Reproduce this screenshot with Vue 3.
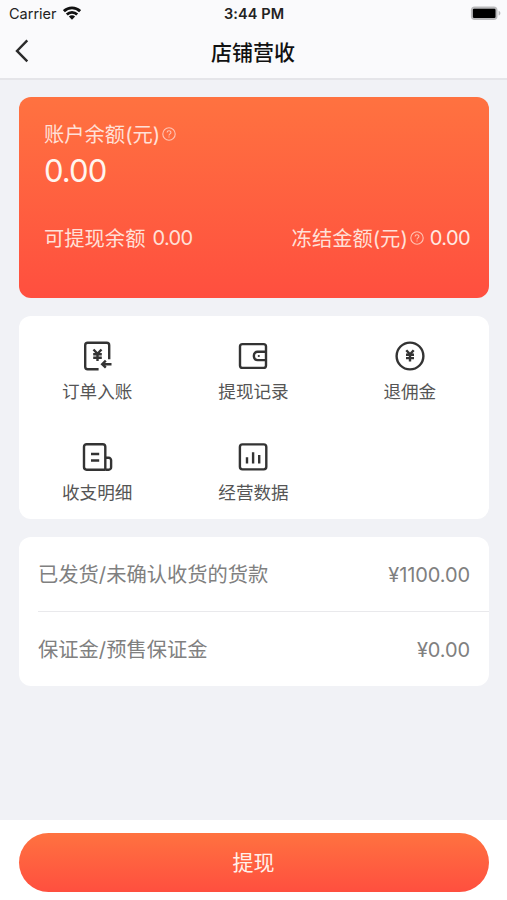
<script setup>
const actions = [
  { icon: 'order', label: '订单入账' },
  { icon: 'wallet', label: '提现记录' },
  { icon: 'refund', label: '退佣金' },
  { icon: 'detail', label: '收支明细' },
  { icon: 'chart', label: '经营数据' },
]

const funds = [
  { label: '已发货/未确认收货的货款', amount: '¥1100.00' },
  { label: '保证金/预售保证金', amount: '¥0.00' },
]
</script>

<template>
  <div class="screen">
    <header class="header">
      <div class="status">
        <div class="carrier">
          <span>Carrier</span>
          <svg class="wifi" width="18" height="14" viewBox="0 0 18 14">
            <g fill="none" stroke="#111" stroke-width="2.8">
              <path d="M.9 5.2a11.5 11.5 0 0 1 16.2 0" />
              <path d="M3.8 8.5a7.4 7.4 0 0 1 10.4 0" />
            </g>
            <path d="M5.9 10.6a4.4 4.4 0 0 1 6.2 0L9 13.7z" fill="#111" />
          </svg>
        </div>
        <span class="time">3:44 PM</span>
        <div class="battery-wrap">
          <svg width="31" height="15" viewBox="0 0 31 15">
            <rect x=".9" y=".5" width="26.6" height="13.6" rx="3.8" fill="#b9b9bb" />
            <rect x="2.9" y="2.7" width="22.6" height="9.2" rx="1.2" fill="#000" />
            <path d="M28.6 4.8c2.4.8 2.4 4 0 4.8z" fill="#b9b9bb" />
          </svg>
        </div>
      </div>
      <div class="nav">
        <svg class="back" width="14" height="24" viewBox="0 0 14 24">
          <path d="M12.3 1.4L2 11.9l10.3 10.5" fill="none" stroke="#2b2b2b" stroke-width="2.4" />
        </svg>
        <h1>店铺营收</h1>
        <span></span>
      </div>
    </header>

    <main class="content">
      <section class="balance">
        <div class="line">
          <span class="label">账户余额(元)</span>
          <svg class="help" width="14" height="14" viewBox="0 0 14 14">
            <circle cx="7" cy="7" r="6.2" />
            <path d="M5.1 5.6c0-2.5 3.8-2.4 3.8-.2 0 1.5-1.9 1.4-1.9 3M7 9.5v1.1" />
          </svg>
        </div>
        <div class="total">0.00</div>
        <div class="line split">
          <div class="line"><span class="label">可提现余额</span><span class="num">0.00</span></div>
          <div class="line">
            <span class="label">冻结金额(元)</span>
            <svg class="help" width="14" height="14" viewBox="0 0 14 14">
              <circle cx="7" cy="7" r="6.2" />
              <path d="M5.1 5.6c0-2.5 3.8-2.4 3.8-.2 0 1.5-1.9 1.4-1.9 3M7 9.5v1.1" />
            </svg>
            <span class="num frozen">0.00</span>
          </div>
        </div>
      </section>

      <section class="actions">
        <div v-for="item in actions" :key="item.icon" class="action">
          <svg class="icon" width="32" height="32" viewBox="0 0 32 32">
            <g v-if="item.icon === 'order'">
              <path d="M17.6 29.2H6.7a2.5 2.5 0 0 1-2.5-2.5V5.3a2.5 2.5 0 0 1 2.5-2.5h19a2.5 2.5 0 0 1 2.5 2.5v14" />
              <path d="M12.5 9.5l4 4.3 4-4.3M12.2 14.2h8.6M12.2 17.7h8.6M16.5 13.8v7.2" />
              <path d="M30.5 24.2h-9M24.8 20.7l-3.6 3.5 3.6 3.5" />
            </g>
            <g v-else-if="item.icon === 'wallet'">
              <rect x="3" y="4.1" width="26" height="23.8" rx="2.5" />
              <path d="M28.5 11.8h-8a3.6 3.6 0 0 0-3.6 3.6v1.1a3.6 3.6 0 0 0 3.6 3.6h8" />
              <circle cx="21.8" cy="16" r="1.1" class="dot" />
            </g>
            <g v-else-if="item.icon === 'refund'">
              <circle cx="16" cy="16" r="13.4" />
              <path d="M12.3 10.2l3.7 4 3.7-4M12 14.7h8M12 18.1h8M16 14.2v7.4" />
            </g>
            <g v-else-if="item.icon === 'detail'">
              <path d="M24.2 28.7H5.6A2.6 2.6 0 0 1 3 26.1V5.8a2.6 2.6 0 0 1 2.6-2.6h16.1a2.6 2.6 0 0 1 2.6 2.6v22.9" />
              <path d="M24.3 16.8h3.4a2.4 2.4 0 0 1 2.4 2.4v7.1a2.4 2.4 0 0 1-2.4 2.4h-3.5M10 13h8.2M10 19.5h8.2" />
            </g>
            <g v-else>
              <rect x="2.9" y="3.4" width="26.4" height="25" rx="2.6" />
              <path d="M10 16.2v6.4M16.1 11.3v11.3M22.2 14.1v8.5" />
            </g>
          </svg>
          <span>{{ item.label }}</span>
        </div>
      </section>

      <section class="funds">
        <div v-for="item in funds" :key="item.label" class="fund">
          <span class="label">{{ item.label }}</span>
          <span class="amount">{{ item.amount }}</span>
        </div>
      </section>
    </main>

    <footer class="footer">
      <button type="button" class="withdraw">提现</button>
    </footer>
  </div>
</template>

<style>
body {
  margin: 0;
}
</style>

<style scoped>
.screen {
  display: flex;
  flex-direction: column;
  width: 507px;
  height: 900px;
  background: #f1f2f6;
  font-family: Inter, "Noto Sans CJK SC", sans-serif;
}
.header {
  box-sizing: border-box;
  height: 80px;
  background: #fafafc;
  border-bottom: 2px solid #e5e5e9;
}
.status {
  display: grid;
  grid-template-columns: 1fr auto 1fr;
  align-items: center;
  height: 27px;
  padding: 0 6px 0 9px;
  font-size: 14.5px;
  color: #222;
}
.carrier {
  display: flex;
  align-items: center;
  gap: 6px;
}
.wifi {
  margin-top: -2px;
}
.time {
  margin-left: -2px;
  font-weight: 600;
  letter-spacing: 0.1px;
}
.battery-wrap {
  display: flex;
  justify-content: flex-end;
}
.nav {
  display: grid;
  grid-template-columns: 1fr auto 1fr;
  align-items: center;
  height: 51px;
  padding: 0 16px 0 15px;
}
.back {
  margin-top: -4px;
}
h1 {
  margin: 0;
  font-size: 21px;
  line-height: 30px;
  font-weight: 500;
  color: #111;
}
.content {
  flex: 1;
  display: flex;
  flex-direction: column;
  gap: 18px;
  padding: 17px 18px 0 19px;
}
.balance {
  box-sizing: border-box;
  height: 201px;
  padding: 22px 19px 0 25px;
  border-radius: 12px;
  background: linear-gradient(#ff7240, #ff4f3f);
  color: #ffe0d8;
  font-size: 20.3px;
}
.line {
  display: flex;
  align-items: center;
  height: 30px;
  white-space: nowrap;
}
.label {
  padding-bottom: 2px;
}
.help {
  margin-left: 2px;
  fill: none;
  stroke: #ffc5b5;
  stroke-width: 1.1;
}
.total {
  height: 44px;
  line-height: 44px;
  font-size: 31px;
  letter-spacing: -0.9px;
  color: #fff5ef;
}
.split {
  justify-content: space-between;
  margin-top: 30px;
}
.num {
  margin-left: 7px;
  font-size: 20px;
  letter-spacing: -0.6px;
}
.frozen {
  margin-left: 6px;
  color: #ffe9e2;
}
.actions {
  box-sizing: border-box;
  display: grid;
  grid-template-columns: repeat(3, 1fr);
  grid-template-rows: 101px 101px;
  height: 203px;
  padding-right: 1px;
  border-radius: 12px;
  background: #fff;
}
.action {
  display: flex;
  flex-direction: column;
  align-items: center;
  gap: 7px;
  padding-top: 24px;
  font-size: 17.6px;
  line-height: 26px;
  color: #555;
}
.icon {
  fill: none;
  stroke: #333;
  stroke-width: 2.4;
}
.dot {
  fill: #333;
  stroke: none;
}
.funds {
  display: flex;
  flex-direction: column;
  height: 149px;
  border-radius: 12px;
  background: #fff;
}
.fund {
  flex: 1;
  display: flex;
  align-items: center;
  justify-content: space-between;
  margin-left: 19px;
  padding-right: 19px;
  font-size: 20.3px;
  color: #808080;
}
.fund + .fund {
  border-top: 1px solid #e9e9ec;
}
.amount {
  padding-top: 1px;
  font-size: 20px;
  letter-spacing: -0.1px;
}
.footer {
  box-sizing: border-box;
  height: 80px;
  padding: 13px 18px 0 19px;
  background: #fff;
}
.withdraw {
  display: block;
  width: 100%;
  height: 59px;
  padding: 0 1px 3px 0;
  border: 0;
  border-radius: 30px;
  background: linear-gradient(#ff7240, #ff4f3f);
  color: #fff0eb;
  font-family: inherit;
  font-size: 21px;
}
</style>
